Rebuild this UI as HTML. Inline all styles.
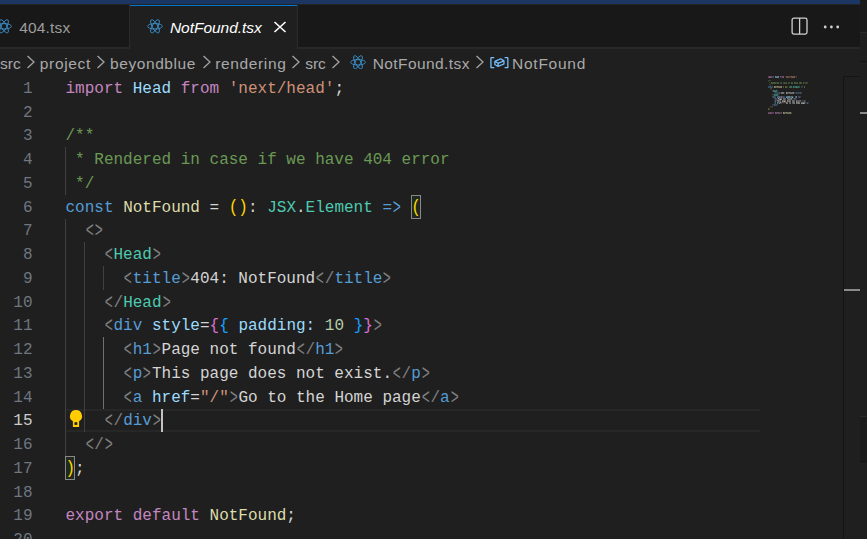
<!DOCTYPE html>
<html><head><meta charset="utf-8">
<style>
*{margin:0;padding:0;box-sizing:border-box}
html,body{width:867px;height:539px;overflow:hidden;background:#1f1f1f}
body{position:relative;font-family:"Liberation Sans",sans-serif;color:#ccc}
#topbar{position:absolute;left:0;top:0;width:860px;height:4px;background:#1c3664}
#tabs{position:absolute;left:0;top:4px;width:860px;height:45px;background:#181818;border-top:1px solid #242424;border-bottom:2px solid #2b2b2b;border-bottom-color:#282828}
.tab{position:absolute;top:0;height:44px;font-size:15.5px;line-height:42px;white-space:nowrap}
#tab1{left:0;width:130px;border-right:1px solid #2b2b2b;color:#9d9d9d;height:42px}
#tab2{left:130px;width:167px;background:#1f1f1f;border-top:1px solid #0078d4;color:#fff;font-style:italic}
.tab span{position:absolute;top:1.5px}
#right{position:absolute;left:860px;top:0;width:7px;height:539px;background:#1f1f1f}
#bc{position:absolute;left:0;top:49px;width:860px;height:27px;font-size:15.5px;line-height:27px;color:#a9a9a9;white-space:nowrap}
#bc span{position:absolute;top:1px}
.chev{position:absolute;top:5.1px;width:16px;height:16px}
.ri{position:absolute}
#code{position:absolute;left:0;top:0;width:760px;height:539px;font-family:"Liberation Mono",monospace;font-size:16px;line-height:24px;white-space:pre;color:#d4d4d4}
.ln{position:absolute;left:0;width:32.5px;text-align:right;color:#6e7681}
.ln.cur{color:#ccc}
.l{position:absolute;left:65.5px}
.k{color:#c586c0}.v{color:#9cdcfe}.s{color:#ce9178}.c{color:#6a9955}.b{color:#569cd6}.f,.v2{color:#dcdcaa}.t{color:#4ec9b0}.g{color:#808080}.y{color:#ffd700}.p{color:#da70d6}.n{color:#b5cea8}.bl{color:#179fff}
.bm{position:absolute;border:1px solid #888;background:#1f291f;width:10px;height:24px}
.hl{position:absolute;left:66px;width:694px;height:2px;background:#272727}
#mm{position:absolute;left:768px;top:76px}
#ovr{position:absolute;left:843px;top:76px;width:17px;height:470px;border-left:1px solid #141414;border-top:1px solid #141414}
.a{display:inline-block;font-style:normal;transform:translateY(0.8px) scale(0.84,1.42)}
.pp{display:inline-block;font-style:normal;transform:translateY(-0.5px) scaleY(1.13)}
.guide{position:absolute;width:1px;background:#404040}
</style></head><body>
<div id="topbar"></div>
<div id="tabs">
<div class="tab" id="tab1"><svg class="ri" viewBox="-11.5 -10.5 23 21" style="left:-4px;top:14px;width:16px;height:14.6px"><g stroke="#3d9bdb" stroke-width="1.15" fill="none"><ellipse rx="10.7" ry="3.9"/><ellipse rx="10.7" ry="3.9" transform="rotate(60)"/><ellipse rx="10.7" ry="3.9" transform="rotate(120)"/></g></svg><span id="t1" style="left:19.27px;letter-spacing:0.158px;">404.tsx</span></div>
<div class="tab" id="tab2"><svg class="ri" viewBox="-11.5 -10.5 23 21" style="left:16.8px;top:13px;width:16px;height:14.6px"><g stroke="#3d9bdb" stroke-width="1.15" fill="none"><ellipse rx="10.7" ry="3.9"/><ellipse rx="10.7" ry="3.9" transform="rotate(60)"/><ellipse rx="10.7" ry="3.9" transform="rotate(120)"/></g></svg><span id="t2" style="left:39.91px;letter-spacing:-0.027px;top:0.5px">NotFound.tsx</span>
<svg style="position:absolute;left:142px;top:13px;width:16px;height:16px" viewBox="0 0 16 16"><path d="M2.5 3 L13.5 13 M13.5 3 L2.5 13" stroke="#fff" stroke-width="1.6" fill="none"/></svg></div>
<div style="position:absolute;left:297px;top:0;width:1px;height:43px;background:#2b2b2b"></div>
<svg style="position:absolute;left:790.5px;top:12px;width:18px;height:18px" viewBox="0 0 18 18"><rect x="1.1" y="1.1" width="14.9" height="16" rx="1.8" fill="none" stroke="#d0d0d0" stroke-width="1.3"/><path d="M8.6 1.1V17" stroke="#d0d0d0" stroke-width="1.3"/></svg>
<svg style="position:absolute;left:822px;top:19px;width:20px;height:6px" viewBox="0 0 20 6"><circle cx="3.2" cy="3" r="1.4" fill="#d0d0d0"/><circle cx="9.4" cy="3" r="1.4" fill="#d0d0d0"/><circle cx="15.7" cy="3" r="1.4" fill="#d0d0d0"/></svg>
</div>
<div id="right"><div style="position:absolute;left:0;top:0;width:7px;height:32px;background:#1a1a1a"></div><div style="position:absolute;left:0;top:32px;width:7px;height:1px;background:#2b2b2b"></div><div style="position:absolute;left:0;top:61px;width:7px;height:1px;background:#121212"></div><div style="position:absolute;left:0;top:112px;width:7px;height:2px;background:#8a8a8a"></div><div style="position:absolute;left:0;top:416px;width:7px;height:1px;background:#2b2b2b"></div><div style="position:absolute;left:0;top:417px;width:7px;height:44px;background:#1b1b1b"></div><div style="position:absolute;left:0;top:461px;width:7px;height:1px;background:#121212"></div></div>
<div id="bc">
<span id="b1" style="left:-0.06px;letter-spacing:0.046px;">src</span><svg class="chev" style="left:23.1px" viewBox="0 0 16 16"><path d="M4.5 1.9 L11 8 L4.5 14.1" fill="none" stroke="#a0a0a0" stroke-width="1.35"/></svg>
<span id="b2" style="left:39.75px;letter-spacing:0.674px;">project</span><svg class="chev" style="left:93.2px" viewBox="0 0 16 16"><path d="M4.5 1.9 L11 8 L4.5 14.1" fill="none" stroke="#a0a0a0" stroke-width="1.35"/></svg>
<span id="b3" style="left:110.05px;letter-spacing:0.579px;">beyondblue</span><svg class="chev" style="left:198.6px" viewBox="0 0 16 16"><path d="M4.5 1.9 L11 8 L4.5 14.1" fill="none" stroke="#a0a0a0" stroke-width="1.35"/></svg>
<span id="b4" style="left:215.28px;letter-spacing:0.625px;">rendering</span><svg class="chev" style="left:288.2px" viewBox="0 0 16 16"><path d="M4.5 1.9 L11 8 L4.5 14.1" fill="none" stroke="#a0a0a0" stroke-width="1.35"/></svg>
<span id="b5" style="left:305.27px;letter-spacing:-0.066px;">src</span><svg class="chev" style="left:328.2px" viewBox="0 0 16 16"><path d="M4.5 1.9 L11 8 L4.5 14.1" fill="none" stroke="#a0a0a0" stroke-width="1.35"/></svg>
<svg class="ri" viewBox="-11.5 -10.5 23 21" style="left:349.8px;top:5.6px;width:16px;height:14.6px"><g stroke="#3d9bdb" stroke-width="1.15" fill="none"><ellipse rx="10.7" ry="3.9"/><ellipse rx="10.7" ry="3.9" transform="rotate(60)"/><ellipse rx="10.7" ry="3.9" transform="rotate(120)"/></g></svg>
<span id="b6" style="left:372.64px;letter-spacing:0.428px;">NotFound.tsx</span><svg class="chev" style="left:471.59999999999997px" viewBox="0 0 16 16"><path d="M4.5 1.9 L11 8 L4.5 14.1" fill="none" stroke="#a0a0a0" stroke-width="1.35"/></svg>
<svg style="position:absolute;left:488.5px;top:2.9px;width:20.8px;height:20px" viewBox="0 0 16 16" preserveAspectRatio="none"><path fill="#75beff" fill-rule="evenodd" clip-rule="evenodd" d="M2 5h2V4H1.5l-.5.5v8l.5.5H4v-1H2V5zm12.5-1H12v1h2v7h-2v1h2.5l.5-.5v-8l-.5-.5zm-2.74 2.57L12 7v2.51l-.3.45-4.5 2h-.46l-2.5-1.5-.24-.43v-2.5l.3-.46 4.5-2h.46l2.5 1.5zM5 9.71l1.5.9V9.28L5 8.38v1.33zm.58-2.15l1.45.87 3.39-1.5-1.45-.87-3.39 1.5zm1.95 3.17l3.5-1.56v-1.4l-3.5 1.55v1.41z"/></svg>
<span id="b7" style="left:512.02px;letter-spacing:0.750px;">NotFound</span>
</div>
<div class="hl" style="top:409px"></div><div class="hl" style="top:430px"></div>
<div class="guide" style="left:65px;top:147px;height:48px"></div>
<div class="guide" style="left:65px;top:219px;height:237px"></div>
<div class="guide" style="left:84px;top:242px;height:190px"></div>
<div class="guide" style="left:103px;top:266px;height:24px"></div>
<div class="guide" style="left:103px;top:337px;height:72px;background:#707070"></div>
<div class="bm" style="left:411px;top:195px"></div>
<div class="bm" style="left:65px;top:456px"></div>
<div style="position:absolute;left:161px;top:409px;width:2px;height:23px;background:#c2c2c2"></div>
<svg style="position:absolute;left:68px;top:408px;width:16px;height:20px" viewBox="0 0 16 20"><path d="M8 2.1 a6 6 0 0 1 3.1 11.15 V19 H4.9 V13.25 A6 6 0 0 1 8 2.1 Z" fill="#ffcc00"/><rect x="6.5" y="14.2" width="2.8" height="2.7" fill="#1f1f1f"/></svg>
<svg id="mm" viewBox="0 0 90 40" width="90" height="40" shape-rendering="crispEdges"><rect x="0" y="0" width="1" height="1" fill="#c586c0" opacity="0.30"/><rect x="0" y="1" width="1" height="1" fill="#c586c0" opacity="0.39"/><rect x="1" y="0" width="1" height="1" fill="#c586c0" opacity="0.54"/><rect x="1" y="1" width="1" height="1" fill="#c586c0" opacity="0.54"/><rect x="2" y="0" width="1" height="1" fill="#c586c0" opacity="0.42"/><rect x="2" y="1" width="1" height="1" fill="#c586c0" opacity="0.61"/><rect x="3" y="0" width="1" height="1" fill="#c586c0" opacity="0.38"/><rect x="3" y="1" width="1" height="1" fill="#c586c0" opacity="0.44"/><rect x="4" y="0" width="1" height="1" fill="#c586c0" opacity="0.33"/><rect x="4" y="1" width="1" height="1" fill="#c586c0" opacity="0.19"/><rect x="5" y="0" width="1" height="1" fill="#c586c0" opacity="0.38"/><rect x="5" y="1" width="1" height="1" fill="#c586c0" opacity="0.29"/><rect x="7" y="0" width="1" height="1" fill="#9cdcfe" opacity="0.56"/><rect x="7" y="1" width="1" height="1" fill="#9cdcfe" opacity="0.46"/><rect x="8" y="0" width="1" height="1" fill="#9cdcfe" opacity="0.38"/><rect x="8" y="1" width="1" height="1" fill="#9cdcfe" opacity="0.52"/><rect x="9" y="0" width="1" height="1" fill="#9cdcfe" opacity="0.38"/><rect x="9" y="1" width="1" height="1" fill="#9cdcfe" opacity="0.54"/><rect x="10" y="0" width="1" height="1" fill="#9cdcfe" opacity="0.54"/><rect x="10" y="1" width="1" height="1" fill="#9cdcfe" opacity="0.49"/><rect x="12" y="0" width="1" height="1" fill="#c586c0" opacity="0.58"/><rect x="12" y="1" width="1" height="1" fill="#c586c0" opacity="0.19"/><rect x="13" y="0" width="1" height="1" fill="#c586c0" opacity="0.33"/><rect x="13" y="1" width="1" height="1" fill="#c586c0" opacity="0.19"/><rect x="14" y="0" width="1" height="1" fill="#c586c0" opacity="0.38"/><rect x="14" y="1" width="1" height="1" fill="#c586c0" opacity="0.44"/><rect x="15" y="0" width="1" height="1" fill="#c586c0" opacity="0.54"/><rect x="15" y="1" width="1" height="1" fill="#c586c0" opacity="0.54"/><rect x="17" y="0" width="1" height="1" fill="#ce9178" opacity="0.19"/><rect x="18" y="0" width="1" height="1" fill="#ce9178" opacity="0.42"/><rect x="18" y="1" width="1" height="1" fill="#ce9178" opacity="0.38"/><rect x="19" y="0" width="1" height="1" fill="#ce9178" opacity="0.38"/><rect x="19" y="1" width="1" height="1" fill="#ce9178" opacity="0.52"/><rect x="20" y="0" width="1" height="1" fill="#ce9178" opacity="0.33"/><rect x="20" y="1" width="1" height="1" fill="#ce9178" opacity="0.38"/><rect x="21" y="0" width="1" height="1" fill="#ce9178" opacity="0.38"/><rect x="21" y="1" width="1" height="1" fill="#ce9178" opacity="0.29"/><rect x="22" y="0" width="1" height="1" fill="#ce9178" opacity="0.29"/><rect x="22" y="1" width="1" height="1" fill="#ce9178" opacity="0.19"/><rect x="23" y="0" width="1" height="1" fill="#ce9178" opacity="0.54"/><rect x="23" y="1" width="1" height="1" fill="#ce9178" opacity="0.38"/><rect x="24" y="0" width="1" height="1" fill="#ce9178" opacity="0.38"/><rect x="24" y="1" width="1" height="1" fill="#ce9178" opacity="0.52"/><rect x="25" y="0" width="1" height="1" fill="#ce9178" opacity="0.38"/><rect x="25" y="1" width="1" height="1" fill="#ce9178" opacity="0.54"/><rect x="26" y="0" width="1" height="1" fill="#ce9178" opacity="0.54"/><rect x="26" y="1" width="1" height="1" fill="#ce9178" opacity="0.49"/><rect x="27" y="0" width="1" height="1" fill="#ce9178" opacity="0.19"/><rect x="28" y="0" width="1" height="1" fill="#d4d4d4" opacity="0.12"/><rect x="28" y="1" width="1" height="1" fill="#d4d4d4" opacity="0.20"/><rect x="0" y="4" width="1" height="1" fill="#6a9955" opacity="0.29"/><rect x="0" y="5" width="1" height="1" fill="#6a9955" opacity="0.19"/><rect x="1" y="4" width="1" height="1" fill="#6a9955" opacity="0.34"/><rect x="2" y="4" width="1" height="1" fill="#6a9955" opacity="0.34"/><rect x="1" y="6" width="1" height="1" fill="#6a9955" opacity="0.34"/><rect x="3" y="6" width="1" height="1" fill="#6a9955" opacity="0.68"/><rect x="3" y="7" width="1" height="1" fill="#6a9955" opacity="0.45"/><rect x="4" y="6" width="1" height="1" fill="#6a9955" opacity="0.38"/><rect x="4" y="7" width="1" height="1" fill="#6a9955" opacity="0.52"/><rect x="5" y="6" width="1" height="1" fill="#6a9955" opacity="0.42"/><rect x="5" y="7" width="1" height="1" fill="#6a9955" opacity="0.38"/><rect x="6" y="6" width="1" height="1" fill="#6a9955" opacity="0.54"/><rect x="6" y="7" width="1" height="1" fill="#6a9955" opacity="0.49"/><rect x="7" y="6" width="1" height="1" fill="#6a9955" opacity="0.38"/><rect x="7" y="7" width="1" height="1" fill="#6a9955" opacity="0.52"/><rect x="8" y="6" width="1" height="1" fill="#6a9955" opacity="0.33"/><rect x="8" y="7" width="1" height="1" fill="#6a9955" opacity="0.19"/><rect x="9" y="6" width="1" height="1" fill="#6a9955" opacity="0.38"/><rect x="9" y="7" width="1" height="1" fill="#6a9955" opacity="0.52"/><rect x="10" y="6" width="1" height="1" fill="#6a9955" opacity="0.54"/><rect x="10" y="7" width="1" height="1" fill="#6a9955" opacity="0.49"/><rect x="12" y="6" width="1" height="1" fill="#6a9955" opacity="0.30"/><rect x="12" y="7" width="1" height="1" fill="#6a9955" opacity="0.39"/><rect x="13" y="6" width="1" height="1" fill="#6a9955" opacity="0.42"/><rect x="13" y="7" width="1" height="1" fill="#6a9955" opacity="0.38"/><rect x="15" y="6" width="1" height="1" fill="#6a9955" opacity="0.32"/><rect x="15" y="7" width="1" height="1" fill="#6a9955" opacity="0.35"/><rect x="16" y="6" width="1" height="1" fill="#6a9955" opacity="0.38"/><rect x="16" y="7" width="1" height="1" fill="#6a9955" opacity="0.54"/><rect x="17" y="6" width="1" height="1" fill="#6a9955" opacity="0.32"/><rect x="17" y="7" width="1" height="1" fill="#6a9955" opacity="0.41"/><rect x="18" y="6" width="1" height="1" fill="#6a9955" opacity="0.38"/><rect x="18" y="7" width="1" height="1" fill="#6a9955" opacity="0.52"/><rect x="20" y="6" width="1" height="1" fill="#6a9955" opacity="0.30"/><rect x="20" y="7" width="1" height="1" fill="#6a9955" opacity="0.39"/><rect x="21" y="6" width="1" height="1" fill="#6a9955" opacity="0.58"/><rect x="21" y="7" width="1" height="1" fill="#6a9955" opacity="0.19"/><rect x="23" y="6" width="1" height="1" fill="#6a9955" opacity="0.39"/><rect x="23" y="7" width="1" height="1" fill="#6a9955" opacity="0.59"/><rect x="24" y="6" width="1" height="1" fill="#6a9955" opacity="0.38"/><rect x="24" y="7" width="1" height="1" fill="#6a9955" opacity="0.52"/><rect x="26" y="6" width="1" height="1" fill="#6a9955" opacity="0.54"/><rect x="26" y="7" width="1" height="1" fill="#6a9955" opacity="0.38"/><rect x="27" y="6" width="1" height="1" fill="#6a9955" opacity="0.38"/><rect x="27" y="7" width="1" height="1" fill="#6a9955" opacity="0.54"/><rect x="28" y="6" width="1" height="1" fill="#6a9955" opacity="0.35"/><rect x="28" y="7" width="1" height="1" fill="#6a9955" opacity="0.36"/><rect x="29" y="6" width="1" height="1" fill="#6a9955" opacity="0.38"/><rect x="29" y="7" width="1" height="1" fill="#6a9955" opacity="0.52"/><rect x="31" y="6" width="1" height="1" fill="#6a9955" opacity="0.39"/><rect x="31" y="7" width="1" height="1" fill="#6a9955" opacity="0.45"/><rect x="32" y="6" width="1" height="1" fill="#6a9955" opacity="0.58"/><rect x="32" y="7" width="1" height="1" fill="#6a9955" opacity="0.43"/><rect x="33" y="6" width="1" height="1" fill="#6a9955" opacity="0.39"/><rect x="33" y="7" width="1" height="1" fill="#6a9955" opacity="0.45"/><rect x="35" y="6" width="1" height="1" fill="#6a9955" opacity="0.38"/><rect x="35" y="7" width="1" height="1" fill="#6a9955" opacity="0.52"/><rect x="36" y="6" width="1" height="1" fill="#6a9955" opacity="0.33"/><rect x="36" y="7" width="1" height="1" fill="#6a9955" opacity="0.19"/><rect x="37" y="6" width="1" height="1" fill="#6a9955" opacity="0.33"/><rect x="37" y="7" width="1" height="1" fill="#6a9955" opacity="0.19"/><rect x="38" y="6" width="1" height="1" fill="#6a9955" opacity="0.38"/><rect x="38" y="7" width="1" height="1" fill="#6a9955" opacity="0.44"/><rect x="39" y="6" width="1" height="1" fill="#6a9955" opacity="0.33"/><rect x="39" y="7" width="1" height="1" fill="#6a9955" opacity="0.19"/><rect x="1" y="8" width="1" height="1" fill="#6a9955" opacity="0.34"/><rect x="2" y="8" width="1" height="1" fill="#6a9955" opacity="0.29"/><rect x="2" y="9" width="1" height="1" fill="#6a9955" opacity="0.19"/><rect x="0" y="10" width="1" height="1" fill="#569cd6" opacity="0.32"/><rect x="0" y="11" width="1" height="1" fill="#569cd6" opacity="0.35"/><rect x="1" y="10" width="1" height="1" fill="#569cd6" opacity="0.38"/><rect x="1" y="11" width="1" height="1" fill="#569cd6" opacity="0.44"/><rect x="2" y="10" width="1" height="1" fill="#569cd6" opacity="0.42"/><rect x="2" y="11" width="1" height="1" fill="#569cd6" opacity="0.38"/><rect x="3" y="10" width="1" height="1" fill="#569cd6" opacity="0.32"/><rect x="3" y="11" width="1" height="1" fill="#569cd6" opacity="0.41"/><rect x="4" y="10" width="1" height="1" fill="#569cd6" opacity="0.38"/><rect x="4" y="11" width="1" height="1" fill="#569cd6" opacity="0.29"/><rect x="6" y="10" width="1" height="1" fill="#dcdcaa" opacity="0.61"/><rect x="6" y="11" width="1" height="1" fill="#dcdcaa" opacity="0.52"/><rect x="7" y="10" width="1" height="1" fill="#dcdcaa" opacity="0.38"/><rect x="7" y="11" width="1" height="1" fill="#dcdcaa" opacity="0.44"/><rect x="8" y="10" width="1" height="1" fill="#dcdcaa" opacity="0.38"/><rect x="8" y="11" width="1" height="1" fill="#dcdcaa" opacity="0.29"/><rect x="9" y="10" width="1" height="1" fill="#dcdcaa" opacity="0.55"/><rect x="9" y="11" width="1" height="1" fill="#dcdcaa" opacity="0.27"/><rect x="10" y="10" width="1" height="1" fill="#dcdcaa" opacity="0.38"/><rect x="10" y="11" width="1" height="1" fill="#dcdcaa" opacity="0.44"/><rect x="11" y="10" width="1" height="1" fill="#dcdcaa" opacity="0.32"/><rect x="11" y="11" width="1" height="1" fill="#dcdcaa" opacity="0.48"/><rect x="12" y="10" width="1" height="1" fill="#dcdcaa" opacity="0.42"/><rect x="12" y="11" width="1" height="1" fill="#dcdcaa" opacity="0.38"/><rect x="13" y="10" width="1" height="1" fill="#dcdcaa" opacity="0.54"/><rect x="13" y="11" width="1" height="1" fill="#dcdcaa" opacity="0.49"/><rect x="15" y="10" width="1" height="1" fill="#d4d4d4" opacity="0.25"/><rect x="15" y="11" width="1" height="1" fill="#d4d4d4" opacity="0.25"/><rect x="17" y="10" width="1" height="1" fill="#ffd700" opacity="0.30"/><rect x="17" y="11" width="1" height="1" fill="#ffd700" opacity="0.33"/><rect x="18" y="10" width="1" height="1" fill="#ffd700" opacity="0.30"/><rect x="18" y="11" width="1" height="1" fill="#ffd700" opacity="0.33"/><rect x="19" y="10" width="1" height="1" fill="#d4d4d4" opacity="0.12"/><rect x="19" y="11" width="1" height="1" fill="#d4d4d4" opacity="0.12"/><rect x="21" y="10" width="1" height="1" fill="#4ec9b0" opacity="0.32"/><rect x="21" y="11" width="1" height="1" fill="#4ec9b0" opacity="0.37"/><rect x="22" y="10" width="1" height="1" fill="#4ec9b0" opacity="0.51"/><rect x="22" y="11" width="1" height="1" fill="#4ec9b0" opacity="0.44"/><rect x="23" y="10" width="1" height="1" fill="#4ec9b0" opacity="0.45"/><rect x="23" y="11" width="1" height="1" fill="#4ec9b0" opacity="0.42"/><rect x="24" y="11" width="1" height="1" fill="#d4d4d4" opacity="0.12"/><rect x="25" y="10" width="1" height="1" fill="#4ec9b0" opacity="0.55"/><rect x="25" y="11" width="1" height="1" fill="#4ec9b0" opacity="0.47"/><rect x="26" y="10" width="1" height="1" fill="#4ec9b0" opacity="0.34"/><rect x="26" y="11" width="1" height="1" fill="#4ec9b0" opacity="0.27"/><rect x="27" y="10" width="1" height="1" fill="#4ec9b0" opacity="0.38"/><rect x="27" y="11" width="1" height="1" fill="#4ec9b0" opacity="0.52"/><rect x="28" y="10" width="1" height="1" fill="#4ec9b0" opacity="0.54"/><rect x="28" y="11" width="1" height="1" fill="#4ec9b0" opacity="0.54"/><rect x="29" y="10" width="1" height="1" fill="#4ec9b0" opacity="0.38"/><rect x="29" y="11" width="1" height="1" fill="#4ec9b0" opacity="0.52"/><rect x="30" y="10" width="1" height="1" fill="#4ec9b0" opacity="0.42"/><rect x="30" y="11" width="1" height="1" fill="#4ec9b0" opacity="0.38"/><rect x="31" y="10" width="1" height="1" fill="#4ec9b0" opacity="0.38"/><rect x="31" y="11" width="1" height="1" fill="#4ec9b0" opacity="0.29"/><rect x="33" y="10" width="1" height="1" fill="#569cd6" opacity="0.25"/><rect x="33" y="11" width="1" height="1" fill="#569cd6" opacity="0.25"/><rect x="34" y="10" width="1" height="1" fill="#569cd6" opacity="0.34"/><rect x="34" y="11" width="1" height="1" fill="#569cd6" opacity="0.17"/><rect x="36" y="10" width="1" height="1" fill="#ffd700" opacity="0.30"/><rect x="36" y="11" width="1" height="1" fill="#ffd700" opacity="0.33"/><rect x="2" y="12" width="1" height="1" fill="#808080" opacity="0.34"/><rect x="2" y="13" width="1" height="1" fill="#808080" opacity="0.17"/><rect x="3" y="12" width="1" height="1" fill="#808080" opacity="0.34"/><rect x="3" y="13" width="1" height="1" fill="#808080" opacity="0.17"/><rect x="4" y="14" width="1" height="1" fill="#808080" opacity="0.34"/><rect x="4" y="15" width="1" height="1" fill="#808080" opacity="0.17"/><rect x="5" y="14" width="1" height="1" fill="#4ec9b0" opacity="0.56"/><rect x="5" y="15" width="1" height="1" fill="#4ec9b0" opacity="0.46"/><rect x="6" y="14" width="1" height="1" fill="#4ec9b0" opacity="0.38"/><rect x="6" y="15" width="1" height="1" fill="#4ec9b0" opacity="0.52"/><rect x="7" y="14" width="1" height="1" fill="#4ec9b0" opacity="0.38"/><rect x="7" y="15" width="1" height="1" fill="#4ec9b0" opacity="0.54"/><rect x="8" y="14" width="1" height="1" fill="#4ec9b0" opacity="0.54"/><rect x="8" y="15" width="1" height="1" fill="#4ec9b0" opacity="0.49"/><rect x="9" y="14" width="1" height="1" fill="#808080" opacity="0.34"/><rect x="9" y="15" width="1" height="1" fill="#808080" opacity="0.17"/><rect x="6" y="16" width="1" height="1" fill="#808080" opacity="0.34"/><rect x="6" y="17" width="1" height="1" fill="#808080" opacity="0.17"/><rect x="7" y="16" width="1" height="1" fill="#569cd6" opacity="0.38"/><rect x="7" y="17" width="1" height="1" fill="#569cd6" opacity="0.29"/><rect x="8" y="16" width="1" height="1" fill="#569cd6" opacity="0.30"/><rect x="8" y="17" width="1" height="1" fill="#569cd6" opacity="0.39"/><rect x="9" y="16" width="1" height="1" fill="#569cd6" opacity="0.38"/><rect x="9" y="17" width="1" height="1" fill="#569cd6" opacity="0.29"/><rect x="10" y="16" width="1" height="1" fill="#569cd6" opacity="0.34"/><rect x="10" y="17" width="1" height="1" fill="#569cd6" opacity="0.27"/><rect x="11" y="16" width="1" height="1" fill="#569cd6" opacity="0.38"/><rect x="11" y="17" width="1" height="1" fill="#569cd6" opacity="0.52"/><rect x="12" y="16" width="1" height="1" fill="#808080" opacity="0.34"/><rect x="12" y="17" width="1" height="1" fill="#808080" opacity="0.17"/><rect x="13" y="16" width="1" height="1" fill="#d4d4d4" opacity="0.39"/><rect x="13" y="17" width="1" height="1" fill="#d4d4d4" opacity="0.45"/><rect x="14" y="16" width="1" height="1" fill="#d4d4d4" opacity="0.58"/><rect x="14" y="17" width="1" height="1" fill="#d4d4d4" opacity="0.43"/><rect x="15" y="16" width="1" height="1" fill="#d4d4d4" opacity="0.39"/><rect x="15" y="17" width="1" height="1" fill="#d4d4d4" opacity="0.45"/><rect x="16" y="16" width="1" height="1" fill="#d4d4d4" opacity="0.12"/><rect x="16" y="17" width="1" height="1" fill="#d4d4d4" opacity="0.12"/><rect x="18" y="16" width="1" height="1" fill="#d4d4d4" opacity="0.61"/><rect x="18" y="17" width="1" height="1" fill="#d4d4d4" opacity="0.52"/><rect x="19" y="16" width="1" height="1" fill="#d4d4d4" opacity="0.38"/><rect x="19" y="17" width="1" height="1" fill="#d4d4d4" opacity="0.44"/><rect x="20" y="16" width="1" height="1" fill="#d4d4d4" opacity="0.38"/><rect x="20" y="17" width="1" height="1" fill="#d4d4d4" opacity="0.29"/><rect x="21" y="16" width="1" height="1" fill="#d4d4d4" opacity="0.55"/><rect x="21" y="17" width="1" height="1" fill="#d4d4d4" opacity="0.27"/><rect x="22" y="16" width="1" height="1" fill="#d4d4d4" opacity="0.38"/><rect x="22" y="17" width="1" height="1" fill="#d4d4d4" opacity="0.44"/><rect x="23" y="16" width="1" height="1" fill="#d4d4d4" opacity="0.32"/><rect x="23" y="17" width="1" height="1" fill="#d4d4d4" opacity="0.48"/><rect x="24" y="16" width="1" height="1" fill="#d4d4d4" opacity="0.42"/><rect x="24" y="17" width="1" height="1" fill="#d4d4d4" opacity="0.38"/><rect x="25" y="16" width="1" height="1" fill="#d4d4d4" opacity="0.54"/><rect x="25" y="17" width="1" height="1" fill="#d4d4d4" opacity="0.49"/><rect x="26" y="16" width="1" height="1" fill="#808080" opacity="0.34"/><rect x="26" y="17" width="1" height="1" fill="#808080" opacity="0.17"/><rect x="27" y="16" width="1" height="1" fill="#808080" opacity="0.29"/><rect x="27" y="17" width="1" height="1" fill="#808080" opacity="0.19"/><rect x="28" y="16" width="1" height="1" fill="#569cd6" opacity="0.38"/><rect x="28" y="17" width="1" height="1" fill="#569cd6" opacity="0.29"/><rect x="29" y="16" width="1" height="1" fill="#569cd6" opacity="0.30"/><rect x="29" y="17" width="1" height="1" fill="#569cd6" opacity="0.39"/><rect x="30" y="16" width="1" height="1" fill="#569cd6" opacity="0.38"/><rect x="30" y="17" width="1" height="1" fill="#569cd6" opacity="0.29"/><rect x="31" y="16" width="1" height="1" fill="#569cd6" opacity="0.34"/><rect x="31" y="17" width="1" height="1" fill="#569cd6" opacity="0.27"/><rect x="32" y="16" width="1" height="1" fill="#569cd6" opacity="0.38"/><rect x="32" y="17" width="1" height="1" fill="#569cd6" opacity="0.52"/><rect x="33" y="16" width="1" height="1" fill="#808080" opacity="0.34"/><rect x="33" y="17" width="1" height="1" fill="#808080" opacity="0.17"/><rect x="4" y="18" width="1" height="1" fill="#808080" opacity="0.34"/><rect x="4" y="19" width="1" height="1" fill="#808080" opacity="0.17"/><rect x="5" y="18" width="1" height="1" fill="#808080" opacity="0.29"/><rect x="5" y="19" width="1" height="1" fill="#808080" opacity="0.19"/><rect x="6" y="18" width="1" height="1" fill="#4ec9b0" opacity="0.56"/><rect x="6" y="19" width="1" height="1" fill="#4ec9b0" opacity="0.46"/><rect x="7" y="18" width="1" height="1" fill="#4ec9b0" opacity="0.38"/><rect x="7" y="19" width="1" height="1" fill="#4ec9b0" opacity="0.52"/><rect x="8" y="18" width="1" height="1" fill="#4ec9b0" opacity="0.38"/><rect x="8" y="19" width="1" height="1" fill="#4ec9b0" opacity="0.54"/><rect x="9" y="18" width="1" height="1" fill="#4ec9b0" opacity="0.54"/><rect x="9" y="19" width="1" height="1" fill="#4ec9b0" opacity="0.49"/><rect x="10" y="18" width="1" height="1" fill="#808080" opacity="0.34"/><rect x="10" y="19" width="1" height="1" fill="#808080" opacity="0.17"/><rect x="4" y="20" width="1" height="1" fill="#808080" opacity="0.34"/><rect x="4" y="21" width="1" height="1" fill="#808080" opacity="0.17"/><rect x="5" y="20" width="1" height="1" fill="#569cd6" opacity="0.54"/><rect x="5" y="21" width="1" height="1" fill="#569cd6" opacity="0.49"/><rect x="6" y="20" width="1" height="1" fill="#569cd6" opacity="0.30"/><rect x="6" y="21" width="1" height="1" fill="#569cd6" opacity="0.39"/><rect x="7" y="20" width="1" height="1" fill="#569cd6" opacity="0.35"/><rect x="7" y="21" width="1" height="1" fill="#569cd6" opacity="0.36"/><rect x="9" y="20" width="1" height="1" fill="#9cdcfe" opacity="0.32"/><rect x="9" y="21" width="1" height="1" fill="#9cdcfe" opacity="0.41"/><rect x="10" y="20" width="1" height="1" fill="#9cdcfe" opacity="0.38"/><rect x="10" y="21" width="1" height="1" fill="#9cdcfe" opacity="0.29"/><rect x="11" y="20" width="1" height="1" fill="#9cdcfe" opacity="0.32"/><rect x="11" y="21" width="1" height="1" fill="#9cdcfe" opacity="0.47"/><rect x="12" y="20" width="1" height="1" fill="#9cdcfe" opacity="0.34"/><rect x="12" y="21" width="1" height="1" fill="#9cdcfe" opacity="0.27"/><rect x="13" y="20" width="1" height="1" fill="#9cdcfe" opacity="0.38"/><rect x="13" y="21" width="1" height="1" fill="#9cdcfe" opacity="0.52"/><rect x="14" y="20" width="1" height="1" fill="#d4d4d4" opacity="0.25"/><rect x="14" y="21" width="1" height="1" fill="#d4d4d4" opacity="0.25"/><rect x="15" y="20" width="1" height="1" fill="#da70d6" opacity="0.36"/><rect x="15" y="21" width="1" height="1" fill="#da70d6" opacity="0.42"/><rect x="16" y="20" width="1" height="1" fill="#179fff" opacity="0.36"/><rect x="16" y="21" width="1" height="1" fill="#179fff" opacity="0.42"/><rect x="18" y="20" width="1" height="1" fill="#9cdcfe" opacity="0.42"/><rect x="18" y="21" width="1" height="1" fill="#9cdcfe" opacity="0.61"/><rect x="19" y="20" width="1" height="1" fill="#9cdcfe" opacity="0.38"/><rect x="19" y="21" width="1" height="1" fill="#9cdcfe" opacity="0.54"/><rect x="20" y="20" width="1" height="1" fill="#9cdcfe" opacity="0.54"/><rect x="20" y="21" width="1" height="1" fill="#9cdcfe" opacity="0.49"/><rect x="21" y="20" width="1" height="1" fill="#9cdcfe" opacity="0.54"/><rect x="21" y="21" width="1" height="1" fill="#9cdcfe" opacity="0.49"/><rect x="22" y="20" width="1" height="1" fill="#9cdcfe" opacity="0.30"/><rect x="22" y="21" width="1" height="1" fill="#9cdcfe" opacity="0.39"/><rect x="23" y="20" width="1" height="1" fill="#9cdcfe" opacity="0.42"/><rect x="23" y="21" width="1" height="1" fill="#9cdcfe" opacity="0.38"/><rect x="24" y="20" width="1" height="1" fill="#9cdcfe" opacity="0.42"/><rect x="24" y="21" width="1" height="1" fill="#9cdcfe" opacity="0.75"/><rect x="25" y="20" width="1" height="1" fill="#9cdcfe" opacity="0.12"/><rect x="25" y="21" width="1" height="1" fill="#9cdcfe" opacity="0.12"/><rect x="27" y="20" width="1" height="1" fill="#b5cea8" opacity="0.34"/><rect x="27" y="21" width="1" height="1" fill="#b5cea8" opacity="0.39"/><rect x="28" y="20" width="1" height="1" fill="#b5cea8" opacity="0.58"/><rect x="28" y="21" width="1" height="1" fill="#b5cea8" opacity="0.43"/><rect x="30" y="20" width="1" height="1" fill="#179fff" opacity="0.36"/><rect x="30" y="21" width="1" height="1" fill="#179fff" opacity="0.42"/><rect x="31" y="20" width="1" height="1" fill="#da70d6" opacity="0.36"/><rect x="31" y="21" width="1" height="1" fill="#da70d6" opacity="0.42"/><rect x="32" y="20" width="1" height="1" fill="#808080" opacity="0.34"/><rect x="32" y="21" width="1" height="1" fill="#808080" opacity="0.17"/><rect x="6" y="22" width="1" height="1" fill="#808080" opacity="0.34"/><rect x="6" y="23" width="1" height="1" fill="#808080" opacity="0.17"/><rect x="7" y="22" width="1" height="1" fill="#569cd6" opacity="0.54"/><rect x="7" y="23" width="1" height="1" fill="#569cd6" opacity="0.38"/><rect x="8" y="22" width="1" height="1" fill="#569cd6" opacity="0.34"/><rect x="8" y="23" width="1" height="1" fill="#569cd6" opacity="0.39"/><rect x="9" y="22" width="1" height="1" fill="#808080" opacity="0.34"/><rect x="9" y="23" width="1" height="1" fill="#808080" opacity="0.17"/><rect x="10" y="22" width="1" height="1" fill="#d4d4d4" opacity="0.64"/><rect x="10" y="23" width="1" height="1" fill="#d4d4d4" opacity="0.29"/><rect x="11" y="22" width="1" height="1" fill="#d4d4d4" opacity="0.38"/><rect x="11" y="23" width="1" height="1" fill="#d4d4d4" opacity="0.54"/><rect x="12" y="22" width="1" height="1" fill="#d4d4d4" opacity="0.42"/><rect x="12" y="23" width="1" height="1" fill="#d4d4d4" opacity="0.75"/><rect x="13" y="22" width="1" height="1" fill="#d4d4d4" opacity="0.38"/><rect x="13" y="23" width="1" height="1" fill="#d4d4d4" opacity="0.52"/><rect x="15" y="22" width="1" height="1" fill="#d4d4d4" opacity="0.42"/><rect x="15" y="23" width="1" height="1" fill="#d4d4d4" opacity="0.38"/><rect x="16" y="22" width="1" height="1" fill="#d4d4d4" opacity="0.38"/><rect x="16" y="23" width="1" height="1" fill="#d4d4d4" opacity="0.44"/><rect x="17" y="22" width="1" height="1" fill="#d4d4d4" opacity="0.38"/><rect x="17" y="23" width="1" height="1" fill="#d4d4d4" opacity="0.29"/><rect x="19" y="22" width="1" height="1" fill="#d4d4d4" opacity="0.58"/><rect x="19" y="23" width="1" height="1" fill="#d4d4d4" opacity="0.19"/><rect x="20" y="22" width="1" height="1" fill="#d4d4d4" opacity="0.38"/><rect x="20" y="23" width="1" height="1" fill="#d4d4d4" opacity="0.44"/><rect x="21" y="22" width="1" height="1" fill="#d4d4d4" opacity="0.32"/><rect x="21" y="23" width="1" height="1" fill="#d4d4d4" opacity="0.48"/><rect x="22" y="22" width="1" height="1" fill="#d4d4d4" opacity="0.42"/><rect x="22" y="23" width="1" height="1" fill="#d4d4d4" opacity="0.38"/><rect x="23" y="22" width="1" height="1" fill="#d4d4d4" opacity="0.54"/><rect x="23" y="23" width="1" height="1" fill="#d4d4d4" opacity="0.49"/><rect x="24" y="22" width="1" height="1" fill="#808080" opacity="0.34"/><rect x="24" y="23" width="1" height="1" fill="#808080" opacity="0.17"/><rect x="25" y="22" width="1" height="1" fill="#808080" opacity="0.29"/><rect x="25" y="23" width="1" height="1" fill="#808080" opacity="0.19"/><rect x="26" y="22" width="1" height="1" fill="#569cd6" opacity="0.54"/><rect x="26" y="23" width="1" height="1" fill="#569cd6" opacity="0.38"/><rect x="27" y="22" width="1" height="1" fill="#569cd6" opacity="0.34"/><rect x="27" y="23" width="1" height="1" fill="#569cd6" opacity="0.39"/><rect x="28" y="22" width="1" height="1" fill="#808080" opacity="0.34"/><rect x="28" y="23" width="1" height="1" fill="#808080" opacity="0.17"/><rect x="6" y="24" width="1" height="1" fill="#808080" opacity="0.34"/><rect x="6" y="25" width="1" height="1" fill="#808080" opacity="0.17"/><rect x="7" y="24" width="1" height="1" fill="#569cd6" opacity="0.42"/><rect x="7" y="25" width="1" height="1" fill="#569cd6" opacity="0.61"/><rect x="8" y="24" width="1" height="1" fill="#808080" opacity="0.34"/><rect x="8" y="25" width="1" height="1" fill="#808080" opacity="0.17"/><rect x="9" y="24" width="1" height="1" fill="#d4d4d4" opacity="0.47"/><rect x="9" y="25" width="1" height="1" fill="#d4d4d4" opacity="0.20"/><rect x="10" y="24" width="1" height="1" fill="#d4d4d4" opacity="0.54"/><rect x="10" y="25" width="1" height="1" fill="#d4d4d4" opacity="0.38"/><rect x="11" y="24" width="1" height="1" fill="#d4d4d4" opacity="0.30"/><rect x="11" y="25" width="1" height="1" fill="#d4d4d4" opacity="0.39"/><rect x="12" y="24" width="1" height="1" fill="#d4d4d4" opacity="0.32"/><rect x="12" y="25" width="1" height="1" fill="#d4d4d4" opacity="0.41"/><rect x="14" y="24" width="1" height="1" fill="#d4d4d4" opacity="0.42"/><rect x="14" y="25" width="1" height="1" fill="#d4d4d4" opacity="0.61"/><rect x="15" y="24" width="1" height="1" fill="#d4d4d4" opacity="0.38"/><rect x="15" y="25" width="1" height="1" fill="#d4d4d4" opacity="0.54"/><rect x="16" y="24" width="1" height="1" fill="#d4d4d4" opacity="0.42"/><rect x="16" y="25" width="1" height="1" fill="#d4d4d4" opacity="0.75"/><rect x="17" y="24" width="1" height="1" fill="#d4d4d4" opacity="0.38"/><rect x="17" y="25" width="1" height="1" fill="#d4d4d4" opacity="0.52"/><rect x="19" y="24" width="1" height="1" fill="#d4d4d4" opacity="0.54"/><rect x="19" y="25" width="1" height="1" fill="#d4d4d4" opacity="0.49"/><rect x="20" y="24" width="1" height="1" fill="#d4d4d4" opacity="0.38"/><rect x="20" y="25" width="1" height="1" fill="#d4d4d4" opacity="0.44"/><rect x="21" y="24" width="1" height="1" fill="#d4d4d4" opacity="0.38"/><rect x="21" y="25" width="1" height="1" fill="#d4d4d4" opacity="0.52"/><rect x="22" y="24" width="1" height="1" fill="#d4d4d4" opacity="0.32"/><rect x="22" y="25" width="1" height="1" fill="#d4d4d4" opacity="0.41"/><rect x="24" y="24" width="1" height="1" fill="#d4d4d4" opacity="0.42"/><rect x="24" y="25" width="1" height="1" fill="#d4d4d4" opacity="0.38"/><rect x="25" y="24" width="1" height="1" fill="#d4d4d4" opacity="0.38"/><rect x="25" y="25" width="1" height="1" fill="#d4d4d4" opacity="0.44"/><rect x="26" y="24" width="1" height="1" fill="#d4d4d4" opacity="0.38"/><rect x="26" y="25" width="1" height="1" fill="#d4d4d4" opacity="0.29"/><rect x="28" y="24" width="1" height="1" fill="#d4d4d4" opacity="0.38"/><rect x="28" y="25" width="1" height="1" fill="#d4d4d4" opacity="0.52"/><rect x="29" y="24" width="1" height="1" fill="#d4d4d4" opacity="0.33"/><rect x="29" y="25" width="1" height="1" fill="#d4d4d4" opacity="0.38"/><rect x="30" y="24" width="1" height="1" fill="#d4d4d4" opacity="0.30"/><rect x="30" y="25" width="1" height="1" fill="#d4d4d4" opacity="0.39"/><rect x="31" y="24" width="1" height="1" fill="#d4d4d4" opacity="0.32"/><rect x="31" y="25" width="1" height="1" fill="#d4d4d4" opacity="0.41"/><rect x="32" y="24" width="1" height="1" fill="#d4d4d4" opacity="0.38"/><rect x="32" y="25" width="1" height="1" fill="#d4d4d4" opacity="0.29"/><rect x="33" y="25" width="1" height="1" fill="#d4d4d4" opacity="0.12"/><rect x="34" y="24" width="1" height="1" fill="#808080" opacity="0.34"/><rect x="34" y="25" width="1" height="1" fill="#808080" opacity="0.17"/><rect x="35" y="24" width="1" height="1" fill="#808080" opacity="0.29"/><rect x="35" y="25" width="1" height="1" fill="#808080" opacity="0.19"/><rect x="36" y="24" width="1" height="1" fill="#569cd6" opacity="0.42"/><rect x="36" y="25" width="1" height="1" fill="#569cd6" opacity="0.61"/><rect x="37" y="24" width="1" height="1" fill="#808080" opacity="0.34"/><rect x="37" y="25" width="1" height="1" fill="#808080" opacity="0.17"/><rect x="6" y="26" width="1" height="1" fill="#808080" opacity="0.34"/><rect x="6" y="27" width="1" height="1" fill="#808080" opacity="0.17"/><rect x="7" y="26" width="1" height="1" fill="#569cd6" opacity="0.38"/><rect x="7" y="27" width="1" height="1" fill="#569cd6" opacity="0.54"/><rect x="9" y="26" width="1" height="1" fill="#9cdcfe" opacity="0.54"/><rect x="9" y="27" width="1" height="1" fill="#9cdcfe" opacity="0.38"/><rect x="10" y="26" width="1" height="1" fill="#9cdcfe" opacity="0.33"/><rect x="10" y="27" width="1" height="1" fill="#9cdcfe" opacity="0.19"/><rect x="11" y="26" width="1" height="1" fill="#9cdcfe" opacity="0.38"/><rect x="11" y="27" width="1" height="1" fill="#9cdcfe" opacity="0.52"/><rect x="12" y="26" width="1" height="1" fill="#9cdcfe" opacity="0.58"/><rect x="12" y="27" width="1" height="1" fill="#9cdcfe" opacity="0.19"/><rect x="13" y="26" width="1" height="1" fill="#d4d4d4" opacity="0.25"/><rect x="13" y="27" width="1" height="1" fill="#d4d4d4" opacity="0.25"/><rect x="14" y="26" width="1" height="1" fill="#ce9178" opacity="0.39"/><rect x="15" y="26" width="1" height="1" fill="#ce9178" opacity="0.29"/><rect x="15" y="27" width="1" height="1" fill="#ce9178" opacity="0.19"/><rect x="16" y="26" width="1" height="1" fill="#ce9178" opacity="0.39"/><rect x="17" y="26" width="1" height="1" fill="#808080" opacity="0.34"/><rect x="17" y="27" width="1" height="1" fill="#808080" opacity="0.17"/><rect x="18" y="26" width="1" height="1" fill="#d4d4d4" opacity="0.51"/><rect x="18" y="27" width="1" height="1" fill="#d4d4d4" opacity="0.51"/><rect x="19" y="26" width="1" height="1" fill="#d4d4d4" opacity="0.38"/><rect x="19" y="27" width="1" height="1" fill="#d4d4d4" opacity="0.44"/><rect x="21" y="26" width="1" height="1" fill="#d4d4d4" opacity="0.38"/><rect x="21" y="27" width="1" height="1" fill="#d4d4d4" opacity="0.29"/><rect x="22" y="26" width="1" height="1" fill="#d4d4d4" opacity="0.38"/><rect x="22" y="27" width="1" height="1" fill="#d4d4d4" opacity="0.44"/><rect x="24" y="26" width="1" height="1" fill="#d4d4d4" opacity="0.38"/><rect x="24" y="27" width="1" height="1" fill="#d4d4d4" opacity="0.29"/><rect x="25" y="26" width="1" height="1" fill="#d4d4d4" opacity="0.54"/><rect x="25" y="27" width="1" height="1" fill="#d4d4d4" opacity="0.38"/><rect x="26" y="26" width="1" height="1" fill="#d4d4d4" opacity="0.38"/><rect x="26" y="27" width="1" height="1" fill="#d4d4d4" opacity="0.52"/><rect x="28" y="26" width="1" height="1" fill="#d4d4d4" opacity="0.56"/><rect x="28" y="27" width="1" height="1" fill="#d4d4d4" opacity="0.46"/><rect x="29" y="26" width="1" height="1" fill="#d4d4d4" opacity="0.38"/><rect x="29" y="27" width="1" height="1" fill="#d4d4d4" opacity="0.44"/><rect x="30" y="26" width="1" height="1" fill="#d4d4d4" opacity="0.54"/><rect x="30" y="27" width="1" height="1" fill="#d4d4d4" opacity="0.54"/><rect x="31" y="26" width="1" height="1" fill="#d4d4d4" opacity="0.38"/><rect x="31" y="27" width="1" height="1" fill="#d4d4d4" opacity="0.52"/><rect x="33" y="26" width="1" height="1" fill="#d4d4d4" opacity="0.42"/><rect x="33" y="27" width="1" height="1" fill="#d4d4d4" opacity="0.61"/><rect x="34" y="26" width="1" height="1" fill="#d4d4d4" opacity="0.38"/><rect x="34" y="27" width="1" height="1" fill="#d4d4d4" opacity="0.54"/><rect x="35" y="26" width="1" height="1" fill="#d4d4d4" opacity="0.42"/><rect x="35" y="27" width="1" height="1" fill="#d4d4d4" opacity="0.75"/><rect x="36" y="26" width="1" height="1" fill="#d4d4d4" opacity="0.38"/><rect x="36" y="27" width="1" height="1" fill="#d4d4d4" opacity="0.52"/><rect x="37" y="26" width="1" height="1" fill="#808080" opacity="0.34"/><rect x="37" y="27" width="1" height="1" fill="#808080" opacity="0.17"/><rect x="38" y="26" width="1" height="1" fill="#808080" opacity="0.29"/><rect x="38" y="27" width="1" height="1" fill="#808080" opacity="0.19"/><rect x="39" y="26" width="1" height="1" fill="#569cd6" opacity="0.38"/><rect x="39" y="27" width="1" height="1" fill="#569cd6" opacity="0.54"/><rect x="40" y="26" width="1" height="1" fill="#808080" opacity="0.34"/><rect x="40" y="27" width="1" height="1" fill="#808080" opacity="0.17"/><rect x="4" y="28" width="1" height="1" fill="#808080" opacity="0.34"/><rect x="4" y="29" width="1" height="1" fill="#808080" opacity="0.17"/><rect x="5" y="28" width="1" height="1" fill="#808080" opacity="0.29"/><rect x="5" y="29" width="1" height="1" fill="#808080" opacity="0.19"/><rect x="6" y="28" width="1" height="1" fill="#569cd6" opacity="0.54"/><rect x="6" y="29" width="1" height="1" fill="#569cd6" opacity="0.49"/><rect x="7" y="28" width="1" height="1" fill="#569cd6" opacity="0.30"/><rect x="7" y="29" width="1" height="1" fill="#569cd6" opacity="0.39"/><rect x="8" y="28" width="1" height="1" fill="#569cd6" opacity="0.35"/><rect x="8" y="29" width="1" height="1" fill="#569cd6" opacity="0.36"/><rect x="9" y="28" width="1" height="1" fill="#808080" opacity="0.34"/><rect x="9" y="29" width="1" height="1" fill="#808080" opacity="0.17"/><rect x="2" y="30" width="1" height="1" fill="#808080" opacity="0.34"/><rect x="2" y="31" width="1" height="1" fill="#808080" opacity="0.17"/><rect x="3" y="30" width="1" height="1" fill="#808080" opacity="0.29"/><rect x="3" y="31" width="1" height="1" fill="#808080" opacity="0.19"/><rect x="4" y="30" width="1" height="1" fill="#808080" opacity="0.34"/><rect x="4" y="31" width="1" height="1" fill="#808080" opacity="0.17"/><rect x="0" y="32" width="1" height="1" fill="#ffd700" opacity="0.30"/><rect x="0" y="33" width="1" height="1" fill="#ffd700" opacity="0.33"/><rect x="1" y="32" width="1" height="1" fill="#d4d4d4" opacity="0.12"/><rect x="1" y="33" width="1" height="1" fill="#d4d4d4" opacity="0.20"/><rect x="0" y="36" width="1" height="1" fill="#c586c0" opacity="0.38"/><rect x="0" y="37" width="1" height="1" fill="#c586c0" opacity="0.52"/><rect x="1" y="36" width="1" height="1" fill="#c586c0" opacity="0.33"/><rect x="1" y="37" width="1" height="1" fill="#c586c0" opacity="0.38"/><rect x="2" y="36" width="1" height="1" fill="#c586c0" opacity="0.42"/><rect x="2" y="37" width="1" height="1" fill="#c586c0" opacity="0.61"/><rect x="3" y="36" width="1" height="1" fill="#c586c0" opacity="0.38"/><rect x="3" y="37" width="1" height="1" fill="#c586c0" opacity="0.44"/><rect x="4" y="36" width="1" height="1" fill="#c586c0" opacity="0.33"/><rect x="4" y="37" width="1" height="1" fill="#c586c0" opacity="0.19"/><rect x="5" y="36" width="1" height="1" fill="#c586c0" opacity="0.38"/><rect x="5" y="37" width="1" height="1" fill="#c586c0" opacity="0.29"/><rect x="7" y="36" width="1" height="1" fill="#c586c0" opacity="0.54"/><rect x="7" y="37" width="1" height="1" fill="#c586c0" opacity="0.49"/><rect x="8" y="36" width="1" height="1" fill="#c586c0" opacity="0.38"/><rect x="8" y="37" width="1" height="1" fill="#c586c0" opacity="0.52"/><rect x="9" y="36" width="1" height="1" fill="#c586c0" opacity="0.58"/><rect x="9" y="37" width="1" height="1" fill="#c586c0" opacity="0.19"/><rect x="10" y="36" width="1" height="1" fill="#c586c0" opacity="0.38"/><rect x="10" y="37" width="1" height="1" fill="#c586c0" opacity="0.54"/><rect x="11" y="36" width="1" height="1" fill="#c586c0" opacity="0.32"/><rect x="11" y="37" width="1" height="1" fill="#c586c0" opacity="0.48"/><rect x="12" y="36" width="1" height="1" fill="#c586c0" opacity="0.34"/><rect x="12" y="37" width="1" height="1" fill="#c586c0" opacity="0.27"/><rect x="13" y="36" width="1" height="1" fill="#c586c0" opacity="0.38"/><rect x="13" y="37" width="1" height="1" fill="#c586c0" opacity="0.29"/><rect x="15" y="36" width="1" height="1" fill="#dcdcaa" opacity="0.61"/><rect x="15" y="37" width="1" height="1" fill="#dcdcaa" opacity="0.52"/><rect x="16" y="36" width="1" height="1" fill="#dcdcaa" opacity="0.38"/><rect x="16" y="37" width="1" height="1" fill="#dcdcaa" opacity="0.44"/><rect x="17" y="36" width="1" height="1" fill="#dcdcaa" opacity="0.38"/><rect x="17" y="37" width="1" height="1" fill="#dcdcaa" opacity="0.29"/><rect x="18" y="36" width="1" height="1" fill="#dcdcaa" opacity="0.55"/><rect x="18" y="37" width="1" height="1" fill="#dcdcaa" opacity="0.27"/><rect x="19" y="36" width="1" height="1" fill="#dcdcaa" opacity="0.38"/><rect x="19" y="37" width="1" height="1" fill="#dcdcaa" opacity="0.44"/><rect x="20" y="36" width="1" height="1" fill="#dcdcaa" opacity="0.32"/><rect x="20" y="37" width="1" height="1" fill="#dcdcaa" opacity="0.48"/><rect x="21" y="36" width="1" height="1" fill="#dcdcaa" opacity="0.42"/><rect x="21" y="37" width="1" height="1" fill="#dcdcaa" opacity="0.38"/><rect x="22" y="36" width="1" height="1" fill="#dcdcaa" opacity="0.54"/><rect x="22" y="37" width="1" height="1" fill="#dcdcaa" opacity="0.49"/><rect x="23" y="36" width="1" height="1" fill="#d4d4d4" opacity="0.12"/><rect x="23" y="37" width="1" height="1" fill="#d4d4d4" opacity="0.20"/></svg>
<div id="ovr"></div>
<div style="position:absolute;left:844px;top:289px;width:16px;height:2px;background:#8a8a8a"></div>
<div id="code">
<div class="ln" style="top:76.75px">1</div><div class="l" style="top:76.75px"><span class="k">import</span> <span class="v">Head</span> <span class="k">from</span> <span class="s">'next/head'</span>;</div>
<div class="ln" style="top:100.5px">2</div><div class="l" style="top:100.5px"></div>
<div class="ln" style="top:124.25px">3</div><div class="l" style="top:124.25px"><span class="c">/**</span></div>
<div class="ln" style="top:148.0px">4</div><div class="l" style="top:148.0px"><span class="c"> * Rendered in case if we have 404 error</span></div>
<div class="ln" style="top:171.75px">5</div><div class="l" style="top:171.75px"><span class="c"> */</span></div>
<div class="ln" style="top:195.5px">6</div><div class="l" style="top:195.5px"><span class="b">const</span> <span class="f">NotFound</span> = <span class="y"><i class="pp">(</i><i class="pp">)</i></span>: <span class="t">JSX</span>.<span class="t">Element</span> <span class="b">=<i class="a">&gt;</i></span> <span class="y"><i class="pp">(</i></span></div>
<div class="ln" style="top:219.25px">7</div><div class="l" style="top:219.25px">  <span class="g"><i class="a">&lt;</i><i class="a">&gt;</i></span></div>
<div class="ln" style="top:243.0px">8</div><div class="l" style="top:243.0px">    <span class="g"><i class="a">&lt;</i></span><span class="t">Head</span><span class="g"><i class="a">&gt;</i></span></div>
<div class="ln" style="top:266.75px">9</div><div class="l" style="top:266.75px">      <span class="g"><i class="a">&lt;</i></span><span class="b">title</span><span class="g"><i class="a">&gt;</i></span>404: NotFound<span class="g"><i class="a">&lt;</i>/</span><span class="b">title</span><span class="g"><i class="a">&gt;</i></span></div>
<div class="ln" style="top:290.5px">10</div><div class="l" style="top:290.5px">    <span class="g"><i class="a">&lt;</i>/</span><span class="t">Head</span><span class="g"><i class="a">&gt;</i></span></div>
<div class="ln" style="top:314.25px">11</div><div class="l" style="top:314.25px">    <span class="g"><i class="a">&lt;</i></span><span class="b">div</span> <span class="v">style</span>=<span class="p">{</span><span class="bl">{</span> <span class="v">padding</span><span class="v">:</span> <span class="n">10</span> <span class="bl">}</span><span class="p">}</span><span class="g"><i class="a">&gt;</i></span></div>
<div class="ln" style="top:338.0px">12</div><div class="l" style="top:338.0px">      <span class="g"><i class="a">&lt;</i></span><span class="b">h1</span><span class="g"><i class="a">&gt;</i></span>Page not found<span class="g"><i class="a">&lt;</i>/</span><span class="b">h1</span><span class="g"><i class="a">&gt;</i></span></div>
<div class="ln" style="top:361.75px">13</div><div class="l" style="top:361.75px">      <span class="g"><i class="a">&lt;</i></span><span class="b">p</span><span class="g"><i class="a">&gt;</i></span>This page does not exist.<span class="g"><i class="a">&lt;</i>/</span><span class="b">p</span><span class="g"><i class="a">&gt;</i></span></div>
<div class="ln" style="top:385.5px">14</div><div class="l" style="top:385.5px">      <span class="g"><i class="a">&lt;</i></span><span class="b">a</span> <span class="v">href</span>=<span class="s">"/"</span><span class="g"><i class="a">&gt;</i></span>Go to the Home page<span class="g"><i class="a">&lt;</i>/</span><span class="b">a</span><span class="g"><i class="a">&gt;</i></span></div>
<div class="ln cur" style="top:409.25px">15</div><div class="l" style="top:409.25px">    <span class="g"><i class="a">&lt;</i>/</span><span class="b">div</span><span class="g"><i class="a">&gt;</i></span></div>
<div class="ln" style="top:433.0px">16</div><div class="l" style="top:433.0px">  <span class="g"><i class="a">&lt;</i>/<i class="a">&gt;</i></span></div>
<div class="ln" style="top:456.75px">17</div><div class="l" style="top:456.75px"><span class="y"><i class="pp">)</i></span>;</div>
<div class="ln" style="top:480.5px">18</div><div class="l" style="top:480.5px"></div>
<div class="ln" style="top:504.25px">19</div><div class="l" style="top:504.25px"><span class="k">export</span> <span class="k">default</span> <span class="v2">NotFound</span>;</div>
<div class="ln" style="top:528.0px">20</div><div class="l" style="top:528.0px"></div>
</div>
</body></html>
